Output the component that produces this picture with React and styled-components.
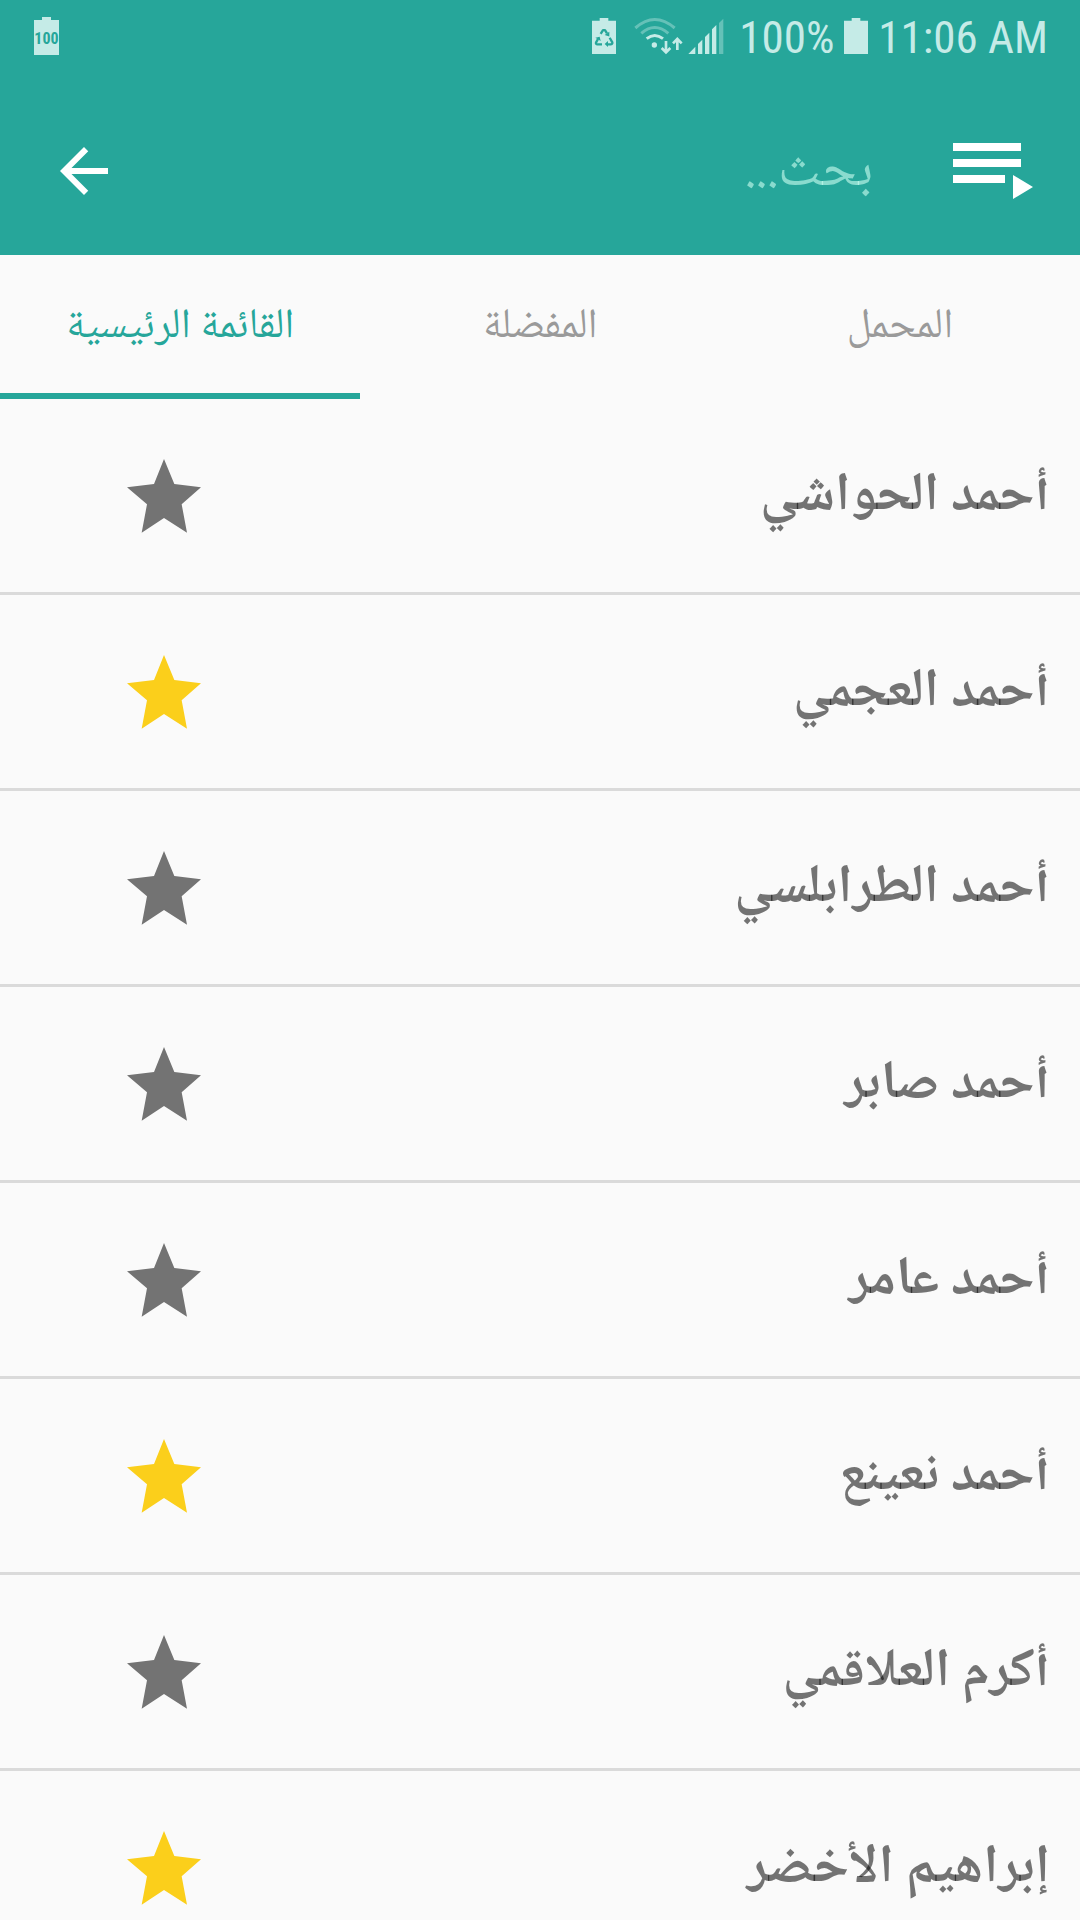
import React, { useState } from 'react';
import styled, { createGlobalStyle } from 'styled-components';

const TEAL = '#26a69a';
const STATUS = '#c5ebe7';

const GlobalStyle = createGlobalStyle`
  *, *::before, *::after { box-sizing: border-box; }
  body { margin: 0; background: #fafafa; }
`;

const Screen = styled.div`
  display: flex;
  flex-direction: column;
  height: 100vh;
  overflow: hidden;
  background: #fafafa;
  font-family: "Noto Naskh Arabic UI", "Noto Naskh Arabic", "Noto Sans Arabic", sans-serif;
`;

const Header = styled.header`
  flex: none;
  display: flex;
  flex-direction: column;
  gap: 15px;
  background: ${TEAL};
`;

const StatusBar = styled.div`
  direction: ltr;
  display: flex;
  align-items: center;
  justify-content: space-between;
  height: 72px;
  padding: 0 32px 0 34px;
`;

const StatusGroup = styled.div`
  display: flex;
  align-items: center;
  gap: ${(p) => p.$gap}px;
`;

const StatusText = styled.span`
  padding-top: 3px;
  font: 400 45px/54px "Roboto Condensed", Roboto, sans-serif;
  color: ${STATUS};
  white-space: nowrap;
`;

const StatusIcon = styled.svg`
  display: block;
  flex: none;
`;

const Toolbar = styled.div`
  display: flex;
  align-items: center;
  height: 168px;
  padding: 0 47px 0 48px;
`;

const IconButton = styled.button`
  flex: none;
  display: grid;
  place-items: center;
  padding: 0;
  border: 0;
  background: none;
  cursor: pointer;
`;

const SearchInput = styled.input`
  flex: 1;
  min-width: 0;
  height: 96px;
  margin: 0 80px;
  padding: 0;
  border: 0;
  outline: 0;
  background: none;
  color: #fff;
  font-family: inherit;
  font-size: 54px;
  &::placeholder { color: rgba(205, 255, 242, 0.6); opacity: 1; }
`;

const Tabs = styled.nav`
  flex: none;
  display: grid;
  grid-template-columns: repeat(3, 1fr);
  height: 144px;
`;

const Tab = styled.button`
  padding: 0;
  border: 0;
  border-top: 4px solid transparent;
  border-bottom: 6px solid ${(p) => (p.$active ? TEAL : 'transparent')};
  background: none;
  color: ${(p) => (p.$active ? TEAL : '#9a9a9a')};
  font-family: inherit;
  font-size: 42px;
  cursor: pointer;
`;

const List = styled.ul`
  margin: 0;
  padding: 0;
  list-style: none;
`;

const Row = styled.li`
  display: flex;
  align-items: center;
  justify-content: space-between;
  height: 196px;
  padding: 0 30px 0 116px;
  border-bottom: 3px solid #dadada;
`;

const Name = styled.span`
  color: rgba(0, 0, 0, 0.54);
  font-size: 54px;
  font-weight: 700;
  line-height: 92px;
`;

const StarButton = styled(IconButton)`
  width: 96px;
  height: 96px;
  color: ${(p) => (p.$on ? '#fbcf1b' : '#737373')};
`;

const BODY = 'M8 0h9v3h8v35H0V3h8z';

function Battery({ children, width = 24, height = 36 }) {
  return (
    <StatusIcon width={width} height={height} viewBox="0 0 25 38" preserveAspectRatio="none" aria-hidden="true">
      <path d={BODY} fill={STATUS} />
      {children}
    </StatusIcon>
  );
}

function RecycleMark() {
  return (
    <g transform="scale(.347) translate(-66 -54)" fill="none" stroke={TEAL} strokeWidth="7" strokeLinejoin="round">
      <path d="M92 102l7-11h6l6 10" />
      <path d="M84 118l-6 11q-1 5 4 5h14" />
      <path d="M119 114l8 14q1 6-5 6h-9" />
      <path d="M118 96v14l-14-4zM76 114l13-3 3 13zM114 124v18l-10-9z" fill={TEAL} stroke="none" />
    </g>
  );
}

function Wifi() {
  return (
    <StatusIcon width="49" height="38" viewBox="191 48 147 114" fill="none" stroke={STATUS} strokeWidth="9" aria-hidden="true">
      <path d="M195 81Q253 30 313 81" opacity=".4" />
      <path d="M213 97Q253 62 294 97" opacity=".4" />
      <path d="M229 113Q253 94 278 113" />
      <circle cx="252" cy="132" r="8" fill={STATUS} stroke="none" />
      <path d="M287 120v33M274 141l13 13 13-13M321 147v-33M308 127l13-13 13 13" strokeWidth="8" />
    </StatusIcon>
  );
}

function Signal() {
  return (
    <StatusIcon width="36" height="38" viewBox="356 48 108 114" fill={STATUS} aria-hidden="true">
      <path d="M357 159l21-22v22zM386 159v-30l13-13v43zM407 159v-51l13-13v64zM428 159v-74l13-13v87z" />
      <path d="M449 159V66l13-13v106z" opacity=".4" />
    </StatusIcon>
  );
}

function Star() {
  return (
    <svg width="74" height="74" viewBox="0 0 222 222" fill="currentColor" aria-hidden="true">
      <path d="M111 0l31 75 80 10-58 51 16 85-69-44-67 44 16-85L0 85l81-10z" />
    </svg>
  );
}

const TABS = ['المحمل', 'المفضلة', 'القائمة الرئيسية'];

const RECITERS = [
  ['أحمد الحواشي', false],
  ['أحمد العجمي', true],
  ['أحمد الطرابلسي', false],
  ['أحمد صابر', false],
  ['أحمد عامر', false],
  ['أحمد نعينع', true],
  ['أكرم العلاقمي', false],
  ['إبراهيم الأخضر', true],
];

export default function App() {
  const [active, setActive] = useState(2);
  const [stars, setStars] = useState(RECITERS.map(([, on]) => on));
  const toggle = (i) => setStars((s) => s.map((on, j) => (j === i ? !on : on)));

  return (
    <Screen dir="rtl" lang="ar">
      <GlobalStyle />
      <Header>
        <StatusBar>
          <Battery width={25} height={38}>
            <text x="12.5" y="27" textAnchor="middle" fontFamily="Roboto Condensed, Roboto, sans-serif" fontWeight="700" fontSize="16" fill={TEAL}>100</text>
          </Battery>
          <StatusGroup $gap={15}>
            <StatusGroup $gap={18}>
              <Battery>
                <RecycleMark />
              </Battery>
              <StatusGroup $gap={5}>
                <Wifi />
                <Signal />
              </StatusGroup>
            </StatusGroup>
            <StatusGroup $gap={10}>
              <StatusText>100%</StatusText>
              <Battery />
              <StatusText>11:06 AM</StatusText>
            </StatusGroup>
          </StatusGroup>
        </StatusBar>
        <Toolbar>
          <IconButton aria-label="قائمة التشغيل">
            <svg width="80" height="56" viewBox="0 0 80 56" fill="#fff" aria-hidden="true">
              <path d="M0 0h68v8H0zM0 16h68v8H0zM0 32h52v8H0zM60 32l20 12-20 12z" />
            </svg>
          </IconButton>
          <SearchInput type="text" aria-label="بحث" placeholder="بحث..." />
          <IconButton aria-label="رجوع">
            <svg width="72" height="72" viewBox="0 0 24 24" fill="#fff" aria-hidden="true">
              <path d="M20 11H7.83l5.59-5.59L12 4l-8 8 8 8 1.41-1.41L7.83 13H20v-2z" />
            </svg>
          </IconButton>
        </Toolbar>
      </Header>
      <Tabs>
        {TABS.map((label, i) => (
          <Tab key={label} $active={i === active} onClick={() => setActive(i)}>{label}</Tab>
        ))}
      </Tabs>
      <List>
        {RECITERS.map(([name], i) => (
          <Row key={name}>
            <Name>{name}</Name>
            <StarButton $on={stars[i]} aria-label={name} aria-pressed={stars[i]} onClick={() => toggle(i)}>
              <Star />
            </StarButton>
          </Row>
        ))}
      </List>
    </Screen>
  );
}
